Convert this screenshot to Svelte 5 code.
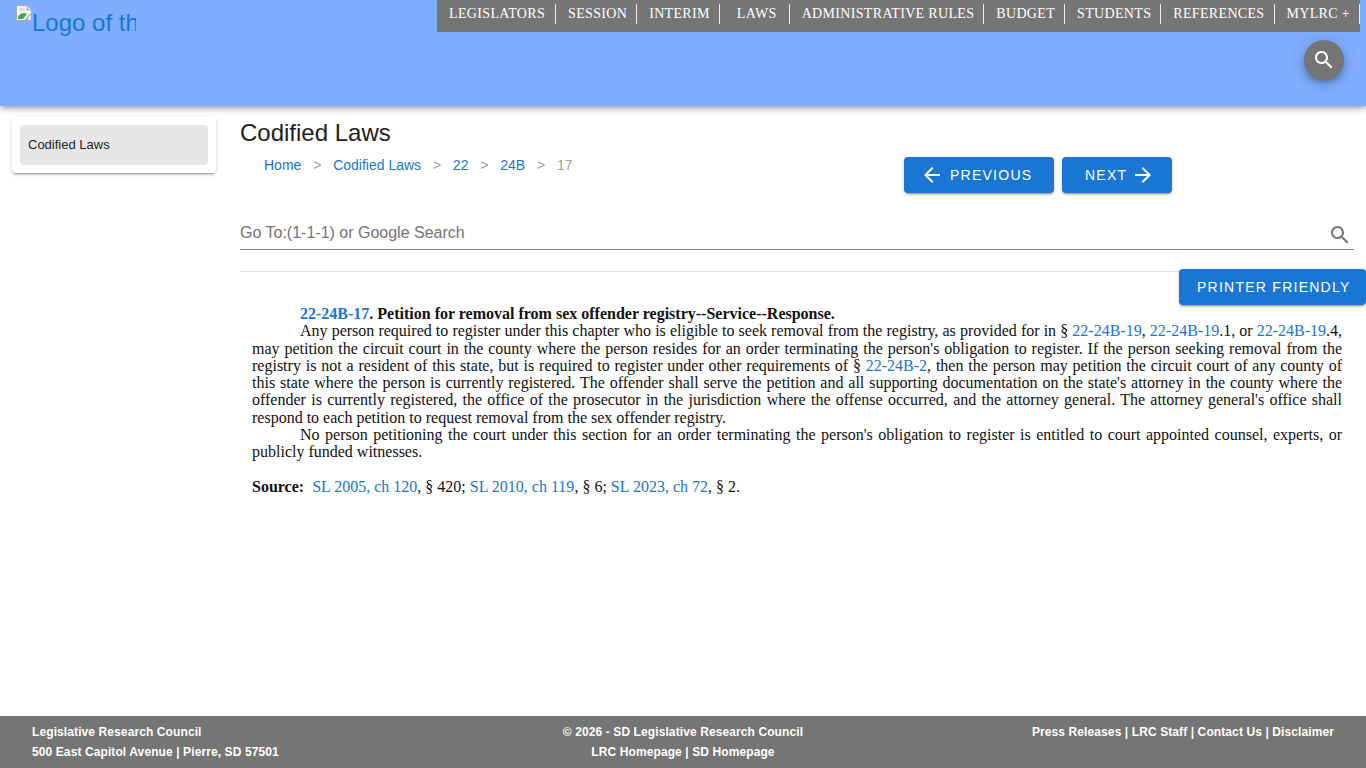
<script>
  const navItems = ['LEGISLATORS', 'SESSION', 'INTERIM', 'LAWS', 'ADMINISTRATIVE RULES', 'BUDGET', 'STUDENTS', 'REFERENCES', 'MYLRC +'];
</script>

<div class="page">
  <header class="app-bar">
    <a class="logo" href="#logo">
      <svg class="broken" width="16" height="16" viewBox="0 0 16 16">
        <path d="M0.5 0.5H11L15.5 5V8L9 15.5H0.5Z" fill="#f4f4f4" stroke="#a9a9a9" />
        <path d="M11 0.5V5H15.5" fill="#ddd" stroke="#a9a9a9" />
        <path d="M2 14V12C4 8 8 7 11 9L7 14Z" fill="#4aa33c" />
        <path d="M3 3H9V6H3Z" fill="#cfe0f7" />
        <path d="M12 11L15.5 9V15.5H11Z" fill="#dfe6ef" stroke="#a9a9a9" />
      </svg><span>Logo of the South Dakota Legislature</span>
    </a>
    <div class="bar-right">
      <nav class="top-nav">
        {#each navItems as item}
          <a href="#nav" class:wide={item === 'LAWS'}>{item}</a>
        {/each}
      </nav>
      <button class="fab" aria-label="Search">
        <svg width="24" height="24" viewBox="0 0 24 24"><path fill="#fff" d="M15.5 14h-.79l-.28-.27C15.41 12.59 16 11.11 16 9.5 16 5.91 13.09 3 9.5 3S3 5.91 3 9.5 5.91 16 9.5 16c1.61 0 3.09-.59 4.23-1.57l.27.28v.79l5 4.99L20.49 19l-4.99-5zm-6 0C7.01 14 5 11.99 5 9.5S7.01 5 9.5 5 14 7.01 14 9.5 11.99 14 9.5 14z"/></svg>
      </button>
    </div>
  </header>

  <div class="body-row">
    <aside class="side">
      <div class="side-card">
        <div class="side-item">Codified Laws</div>
      </div>
    </aside>

    <main class="content">
      <h1>Codified Laws</h1>
      <div class="crumb-row">
        <ol class="crumbs">
          <li><a href="#c">Home</a></li>
          <li class="sep">&gt;</li>
          <li><a href="#c">Codified Laws</a></li>
          <li class="sep">&gt;</li>
          <li><a href="#c">22</a></li>
          <li class="sep">&gt;</li>
          <li><a href="#c">24B</a></li>
          <li class="sep">&gt;</li>
          <li class="current">17</li>
        </ol>
        <div class="pager">
          <button class="btn prev">
            <svg width="24" height="24" viewBox="0 0 24 24"><path fill="#fff" d="M20 11H7.83l5.59-5.59L12 4l-8 8 8 8 1.41-1.41L7.83 13H20v-2z"/></svg>
            PREVIOUS
          </button>
          <button class="btn next">
            NEXT
            <svg width="24" height="24" viewBox="0 0 24 24"><path fill="#fff" d="M12 4l-1.41 1.41L16.17 11H4v2h12.17l-5.58 5.59L12 20l8-8z"/></svg>
          </button>
        </div>
      </div>

      <div class="search">
        <span>Go To:(1-1-1) or Google Search</span>
        <svg width="24" height="24" viewBox="0 0 24 24"><path fill="#757575" d="M15.5 14h-.79l-.28-.27C15.41 12.59 16 11.11 16 9.5 16 5.91 13.09 3 9.5 3S3 5.91 3 9.5 5.91 16 9.5 16c1.61 0 3.09-.59 4.23-1.57l.27.28v.79l5 4.99L20.49 19l-4.99-5zm-6 0C7.01 14 5 11.99 5 9.5S7.01 5 9.5 5 14 7.01 14 9.5 11.99 14 9.5 14z"/></svg>
      </div>

      <hr />

      <div class="print-row">
        <button class="btn print">PRINTER FRIENDLY</button>
      </div>

      <article class="statute">
        <p class="indent"><b><a href="#s">22-24B-17</a>. Petition for removal from sex offender registry--Service--Response.</b></p>
        <p class="indent">Any person required to register under this chapter who is eligible to seek removal from the registry, as provided for in § <a href="#s">22-24B-19</a>, <a href="#s">22-24B-19</a>.1, or <a href="#s">22-24B-19</a>.4, may petition the circuit court in the county where the person resides for an order terminating the person's obligation to register. If the person seeking removal from the registry is not a resident of this state, but is required to register under other requirements of § <a href="#s">22-24B-2</a>, then the person may petition the circuit court of any county of this state where the person is currently registered. The offender shall serve the petition and all supporting documentation on the state's attorney in the county where the offender is currently registered, the office of the prosecutor in the jurisdiction where the offense occurred, and the attorney general. The attorney general's office shall respond to each petition to request removal from the sex offender registry.</p>
        <p class="indent">No person petitioning the court under this section for an order terminating the person's obligation to register is entitled to court appointed counsel, experts, or publicly funded witnesses.</p>
        <p class="source"><b>Source:</b>&nbsp; <a href="#s">SL 2005, ch 120</a>, § 420; <a href="#s">SL 2010, ch 119</a>, § 6; <a href="#s">SL 2023, ch 72</a>, § 2.</p>
      </article>
    </main>
  </div>

  <footer class="foot">
    <div class="foot-left">
      <div>Legislative Research Council</div>
      <div>500 East Capitol Avenue | Pierre, SD 57501</div>
    </div>
    <div class="foot-mid">
      <div>© 2026 - SD Legislative Research Council</div>
      <div>LRC Homepage | SD Homepage</div>
    </div>
    <div class="foot-right">
      <div>Press Releases | LRC Staff | Contact Us | Disclaimer</div>
    </div>
  </footer>
</div>

<style>
  :global(body) {
    margin: 0;
    background: #fff;
    font-family: "Liberation Sans", Arial, sans-serif;
  }

  .page {
    min-height: 768px;
    display: flex;
    flex-direction: column;
    overflow: hidden;
  }

  .app-bar {
    height: 106px;
    background: #7fadff;
    box-shadow: 0 2px 4px -1px rgba(0,0,0,.2), 0 4px 5px rgba(0,0,0,.14), 0 1px 10px rgba(0,0,0,.12);
    display: flex;
    justify-content: space-between;
    position: relative;
    flex: none;
  }

  .logo {
    display: block;
    width: 120px;
    height: 40px;
    margin: 5px 0 0 16px;
    overflow: hidden;
    white-space: nowrap;
    color: #1976d2;
    font-size: 24px;
    line-height: 31px;
    text-decoration: none;
  }

  .broken {
    vertical-align: 10px;
  }

  .bar-right {
    display: flex;
    flex-direction: column;
    align-items: flex-end;
  }

  .top-nav {
    display: flex;
    align-items: flex-start;
    height: 32px;
    margin-right: 6px;
    background: #757575;
  }

  .top-nav a {
    color: #fff;
    text-decoration: none;
    font-family: "Liberation Serif", serif;
    font-size: 14px;
    letter-spacing: 0.33px;
    line-height: 20px;
    margin-top: 4px;
    padding: 0 9px 0 12px;
    border-right: 1px solid #eee;
    white-space: nowrap;
  }

  .top-nav a:first-child {
    padding-right: 10px;
  }

  .top-nav a.wide {
    padding: 0 12px 0 17px;
  }

  .fab {
    width: 40px;
    height: 40px;
    margin: 8px 22px 0 0;
    border: 0;
    border-radius: 50%;
    background: #757575;
    display: flex;
    align-items: center;
    justify-content: center;
    padding: 0;
    box-shadow: 0 3px 5px -1px rgba(0,0,0,.2), 0 6px 10px rgba(0,0,0,.14), 0 1px 18px rgba(0,0,0,.12);
  }

  .body-row {
    flex: 1;
    display: flex;
  }

  .side {
    width: 240px;
    flex: none;
    padding: 11px 0 0 12px;
    box-sizing: border-box;
  }

  .side-card {
    width: 204px;
    padding: 8px;
    box-sizing: border-box;
    background: #fff;
    border-radius: 4px;
    box-shadow: 0 3px 1px -2px rgba(0,0,0,.2), 0 2px 2px rgba(0,0,0,.14), 0 1px 5px rgba(0,0,0,.12);
  }

  .side-item {
    height: 40px;
    line-height: 39px;
    padding-left: 8px;
    background: #e6e6e6;
    border-radius: 4px;
    font-size: 13px;
    color: #1f1f1f;
  }

  .content {
    flex: 1;
    min-width: 0;
  }

  h1 {
    margin: 14px 0 0;
    font-size: 24px;
    line-height: 26px;
    font-weight: 400;
    color: #212121;
  }

  .crumb-row {
    display: flex;
    align-items: flex-start;
    height: 62px;
  }

  .crumbs {
    list-style: none;
    display: flex;
    margin: 0;
    padding: 11px 0 0 24px;
    font-size: 14px;
    line-height: 16px;
    width: 640px;
    box-sizing: border-box;
  }

  .crumbs li {
    margin-right: 11.8px;
  }

  .crumbs a {
    color: #1976d2;
    text-decoration: none;
  }

  .sep, .current {
    color: #a0a0a0;
  }

  .pager {
    display: flex;
    gap: 8px;
    margin: 11px 0 0 24px;
  }

  .btn {
    height: 36px;
    border: 0;
    border-radius: 4px;
    background: #1976d2;
    color: #fff;
    font-family: inherit;
    font-size: 14px;
    letter-spacing: 1.25px;
    display: flex;
    align-items: center;
    justify-content: flex-start;
    padding: 0;
    box-shadow: 0 3px 1px -2px rgba(0,0,0,.2), 0 2px 2px rgba(0,0,0,.14), 0 1px 5px rgba(0,0,0,.12);
  }

  .prev { width: 150px; padding-left: 16px; gap: 6px; }
  .next { width: 110px; padding-left: 23px; gap: 4px; }
  .print { width: 187px; padding-left: 18px; }

  .search {
    margin: 0 12px 0 0;
    height: 42px;
    box-sizing: border-box;
    padding-top: 13px;
    border-bottom: 1px solid #8a8a8a;
    display: flex;
    justify-content: space-between;
    color: #757575;
    font-size: 16px;
    line-height: 24px;
  }

  .search svg {
    margin: 2px 2px 0 0;
  }

  hr {
    margin: 21px 0 0;
    border: 0;
    border-top: 1px solid #e0e0e0;
  }

  .print-row {
    display: flex;
    justify-content: flex-end;
    margin-top: -3px;
  }

  .statute {
    margin: 0 24px 0 12px;
    padding-top: 0;
    font-family: "Liberation Serif", "Times New Roman", serif;
    font-size: 16px;
    line-height: 17.25px;
    color: #111;
    text-align: justify;
  }

  .statute p {
    margin: 0;
  }

  .statute a {
    color: #1976d2;
    text-decoration: none;
  }

  .indent {
    text-indent: 48px;
  }

  .statute .source {
    margin-top: 17.25px;
  }

  .foot {
    height: 52px;
    flex: none;
    background: #757575;
    color: #fff;
    font-size: 12px;
    font-weight: 700;
    letter-spacing: 0.1px;
    line-height: 20px;
    padding: 6px 32px 0;
    box-sizing: border-box;
    display: grid;
    grid-template-columns: 1fr 1fr 1fr;
  }

  .foot-mid {
    text-align: center;
  }

  .foot-right {
    text-align: right;
  }
</style>
